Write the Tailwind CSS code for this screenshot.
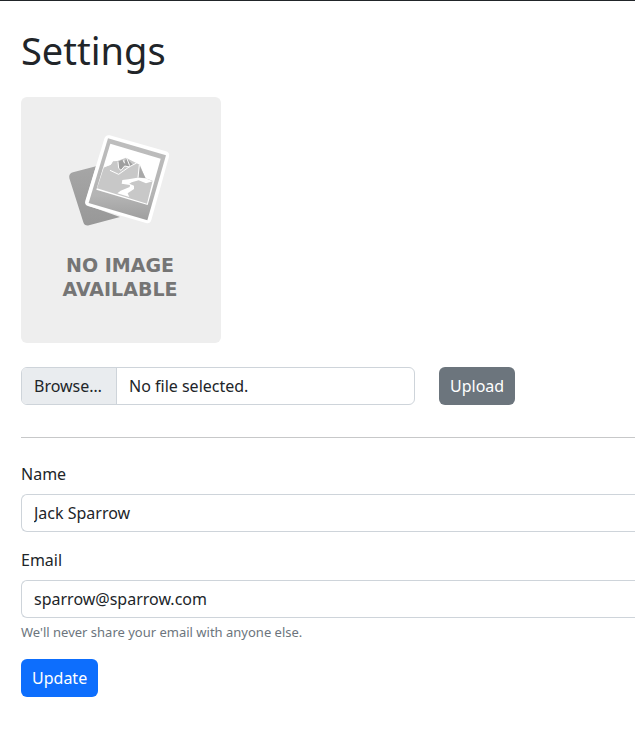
<!DOCTYPE html>
<html lang="en">
<head>
<meta charset="utf-8">
<meta name="viewport" content="width=device-width, initial-scale=1">
<title>Settings</title>
<script src="https://cdn.jsdelivr.net/npm/@tailwindcss/browser@4"></script>
</head>
<body class="bg-white font-['Noto_Sans',sans-serif] text-base text-[#212529]">
<main class="border-t border-[#212529] pt-6 pb-12 pl-[21px]">
  <h1 class="mb-[22px] text-[38px] leading-[50px]">Settings</h1>

  <svg class="mb-6 block h-[246px] w-[200px] rounded-md bg-[#eeeeee]" viewBox="0 0 200 246" role="img" aria-label="No image available">
    <defs>
      <linearGradient id="back" x1="0" y1="0" x2="0" y2="1"><stop offset="0" stop-color="#a6a6a6"/><stop offset="1" stop-color="#989898"/></linearGradient>
      <linearGradient id="frame" x1="0" y1="0" x2="0" y2="1"><stop offset="0" stop-color="#bebebe"/><stop offset=".7" stop-color="#b4b4b4"/><stop offset="1" stop-color="#9e9e9e"/></linearGradient>
    </defs>
    <g transform="translate(39 28) scale(.33333)">
      <path d="M39 142 L108 124 L78 226 Q74 239 86 242 L180 276 L87 301 Q74 304 70 292 L28 160 Q25 146 39 142Z" fill="url(#back)"/>
      <path d="M149 31 L318 79 Q330 83 327 95 L274 285 Q270 297 258 294 L86 244 Q72 240 76 227 L133 41 Q137 28 149 31Z" fill="#fff"/>
      <path d="M144 40 L318 91 L262 286 L86 234Z" fill="url(#frame)"/>
      <path d="M151 56 L302 101 L263 240 L109 194Z" fill="#fff"/>
      <path d="M132 126 L152 119 L158 109 L172 108 L198 98 L230 115 L240 120 L256 160 L278 167 L261 236 L111 190Z" fill="#c8c8c8"/>
      <path d="M174 110 L187 104 L192 113 L200 99 L208 108 L219 120 L207 125 L194 123 L182 136 L174 128Z" fill="#9f9f9f"/>
      <path d="M238 121 L257 160 L236 157Z" fill="#a9a9a9"/>
      <path d="M132 126 L152 118 L158 108 M150 136 L176 148 L190 138 L207 126 L230 114 M174 110 L176 130 L183 136 L194 123 L208 126 M190 106 L194 115 M200 99 L209 122 M238 120 L234 158" fill="none" stroke="#fff" stroke-width="3"/>
      <path d="M278 169 L256 160 L232 158 L205 163 L187 165 L185 176 L210 180 L209 186 L182 197 L172 205 L208 216 L203 205 L222 192 L222 182 L208 176 L215 172 L236 166 L258 175Z" fill="#fff"/>
    </g>
    <g class="fill-[#757575] font-['DejaVu_Sans',sans-serif] text-[19px] font-bold" text-anchor="middle">
      <text x="99" y="175">NO IMAGE</text>
      <text x="99" y="199">AVAILABLE</text>
    </g>
  </svg>

  <form class="flex gap-6">
    <label for="picture" class="flex h-[38px] max-w-[394px] flex-1 cursor-pointer overflow-hidden rounded-md border border-[#ced4da] leading-6 focus-within:border-[#86b7fe]">
      <input id="picture" type="file" class="sr-only" aria-label="Profile picture">
      <span class="min-w-[95px] border-r border-[#ced4da] bg-[#e9ecef] px-3 py-1.5">Browse…</span>
      <span class="px-3 py-1.5">No file selected.</span>
    </label>
    <button type="button" class="h-[38px] rounded-md bg-[#6c757d] px-[11px] text-white">Upload</button>
  </form>

  <hr class="mt-8 mb-6 border-[#c7c8c9]">

  <form>
    <label for="name" class="mb-2 block leading-6">Name</label>
    <input id="name" type="text" value="Jack Sparrow" class="mb-4 block h-[38px] w-full rounded-l-md border border-r-0 border-[#ced4da] bg-white px-3 leading-6 outline-none focus:border-[#86b7fe]">
    <label for="email" class="mb-2 block leading-6">Email</label>
    <input id="email" type="email" value="sparrow@sparrow.com" aria-describedby="email-help" class="block h-[38px] w-full rounded-l-md border border-r-0 border-[#ced4da] bg-white px-3 leading-6 outline-none focus:border-[#86b7fe]">
    <p id="email-help" class="mt-1 mb-4 text-[13px] leading-[21px] text-[#6c757d]">We'll never share your email with anyone else.</p>
    <button type="button" class="h-[38px] rounded-md bg-[#0d6efd] px-[11px] text-white">Update</button>
  </form>
</main>
</body>
</html>
